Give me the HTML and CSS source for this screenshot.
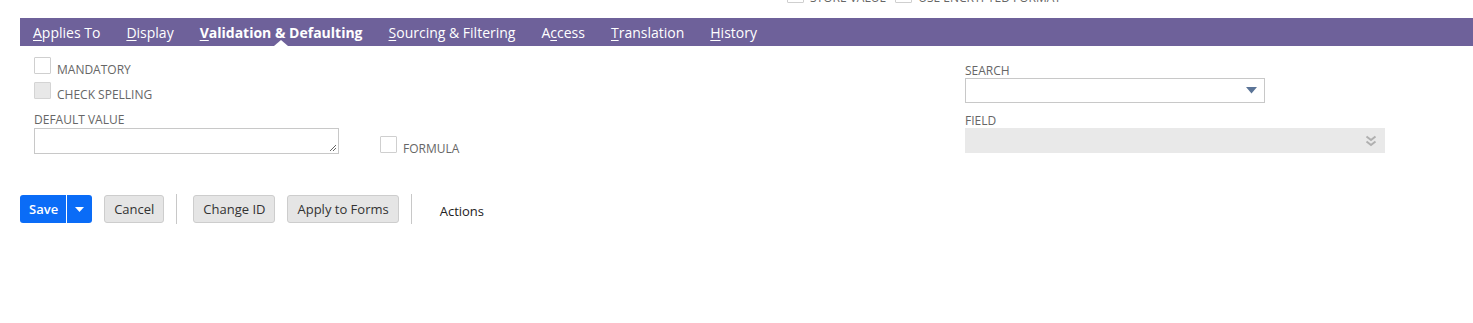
FILE: index.html
```html
<!DOCTYPE html>
<html>
<head>
<meta charset="utf-8">
<link rel="stylesheet" href="styles.css">
</head>
<body>
<div class="topstrip">
  <label class="chk"><span class="box"></span><span class="lbl">STORE VALUE</span></label>
  <label class="chk"><span class="box"></span><span class="lbl">USE ENCRYPTED FORMAT</span></label>
</div>
<nav class="tabs">
  <a class="tab"><u>A</u>pplies To</a>
  <a class="tab"><u>D</u>isplay</a>
  <a class="tab active"><u>V</u>alidation &amp; Defaulting</a>
  <a class="tab"><u>S</u>ourcing &amp; Filtering</a>
  <a class="tab">A<u>c</u>cess</a>
  <a class="tab"><u>T</u>ranslation</a>
  <a class="tab"><u>H</u>istory</a>
</nav>
<div class="form">
  <div class="col left">
    <label class="chk row"><span class="box"></span><span class="lbl">MANDATORY</span></label>
    <label class="chk row"><span class="box disabled"></span><span class="lbl">CHECK SPELLING</span></label>
    <div class="fieldrow">
      <div class="field">
        <div class="flabel">DEFAULT VALUE</div>
        <div class="textarea">
          <svg class="grip" width="8" height="8" viewBox="0 0 8 8"><path d="M7 1L1 7M7 4L4 7" stroke="#666" stroke-width="1" fill="none"/></svg>
        </div>
      </div>
      <label class="chk formula"><span class="box"></span><span class="lbl">FORMULA</span></label>
    </div>
  </div>
  <div class="col right">
    <div class="field">
      <div class="flabel">SEARCH</div>
      <div class="select">
        <svg class="caret" width="11" height="7" viewBox="0 0 11 7"><path d="M0 0H11L5.5 6.5Z" fill="#5b7497"/></svg>
      </div>
    </div>
    <div class="field field2">
      <div class="flabel">FIELD</div>
      <div class="select wide disabled">
        <svg class="dbl" width="12" height="12" viewBox="0 0 12 12"><path d="M1.5 1.5L6 5L10.5 1.5M1.5 6.5L6 10L10.5 6.5" stroke="#b0b0b0" stroke-width="2" fill="none"/></svg>
      </div>
    </div>
  </div>
</div>
<div class="buttons">
  <div class="save">
    <span class="save-main">Save</span>
    <span class="save-drop"><svg width="9" height="5" viewBox="0 0 9 5"><path d="M0 0H9L4.5 5Z" fill="#fff"/></svg></span>
  </div>
  <button class="btn">Cancel</button>
  <span class="sep"></span>
  <button class="btn">Change ID</button>
  <button class="btn">Apply to Forms</button>
  <span class="sep"></span>
  <span class="actions">Actions</span>
</div>
</body>
</html>
```

FILE: styles.css
```css
* { box-sizing: border-box; }
html, body { margin: 0; padding: 0; background: #fff; }
body {
  font-family: "Open Sans", "Liberation Sans", sans-serif;
  color: #333;
  width: 1473px;
  height: 323px;
  overflow: hidden;
}
.topstrip {
  height: 18px;
  display: flex;
  gap: 9px;
  padding-left: 787px;
  align-items: flex-start;
}
.topstrip .chk { margin-top: -14px; }
.chk {
  display: flex;
  align-items: center;
  gap: 6px;
  font-size: 12px;
  color: #666;
  text-transform: uppercase;
}
.box {
  width: 17px;
  height: 17px;
  border: 1px solid #cfcfcf;
  background: #fff;
  border-radius: 1px;
  flex: none;
}
.box.disabled { background: #e8e8e8; border-color: #d4d4d4; }
.lbl { line-height: 16px; position: relative; top: 3px; white-space: nowrap; }
.tabs {
  margin-left: 20px;
  height: 28px;
  background: #6e619a;
  display: flex;
  align-items: center;
  padding-left: 13px;
}
.tab {
  color: #fff;
  font-size: 14px;
  margin-right: 26px;
  position: relative;
  line-height: 28px;
  padding-top: 1px;
  height: 28px;
  white-space: nowrap;
}
.tab u { text-decoration: underline; text-underline-offset: 2px; }
.tab.active { font-weight: 700; }
.tab.active::after {
  content: "";
  position: absolute;
  left: 50%;
  bottom: 0;
  margin-left: -7px;
  border-left: 7px solid transparent;
  border-right: 7px solid transparent;
  border-bottom: 6px solid #fff;
}
.form {
  display: flex;
  padding-left: 34px;
  padding-top: 11px;
}
.col.left { width: 931px; }
.row { height: 25px; align-items: flex-start; }
.row .lbl { top: 5px; }
.fieldrow { display: flex; align-items: flex-start; margin-top: 3px; }
.flabel {
  font-size: 12px;
  color: #666;
  line-height: 16px;
  height: 18px;
  padding-top: 2px;
}
.textarea {
  width: 305px;
  height: 26px;
  border: 1px solid #c8c8c8;
  position: relative;
}
.grip { position: absolute; right: 1px; bottom: 1px; }
.formula { margin-left: 41px; margin-top: 26px; align-items: flex-start; }
.formula .lbl { top: 5px; }
.col.right { padding-top: 4px; }
.select {
  width: 300px;
  height: 25px;
  border: 1px solid #c8c8c8;
  position: relative;
  margin-top: -1px;
}
.caret { position: absolute; right: 7px; top: 8px; }
.field2 { margin-top: 8px; }
.select.wide { width: 420px; }
.select.disabled { background: #e9e9e9; border-color: #e9e9e9; }
.dbl { position: absolute; right: 7px; top: 6px; }
.buttons {
  display: flex;
  align-items: center;
  padding-left: 20px;
  margin-top: 40px;
  gap: 12px;
  height: 30px;
}
.save {
  display: flex;
  height: 28px;
  background: #0a6cf7;
  border-radius: 3px;
  color: #fff;
  font-weight: 600;
  font-size: 13px;
}
.save-main { padding: 0 8px 0 9px; line-height: 28px; border-right: 1px solid #fff; }
.save-drop { width: 25px; display: flex; align-items: center; justify-content: center; }
.btn {
  height: 28px;
  font-family: inherit;
  font-size: 13px;
  color: #333;
  background: #e5e5e5;
  border: 1px solid #cdcdcd;
  border-radius: 3px;
  padding: 0 9px;
  margin: 0;
}
.sep { width: 1px; height: 30px; background: #c8c8c8; margin: 0 4px 0 0; }
.actions { font-size: 13px; color: #222; margin-left: 12px; margin-top: 3px; }
```
